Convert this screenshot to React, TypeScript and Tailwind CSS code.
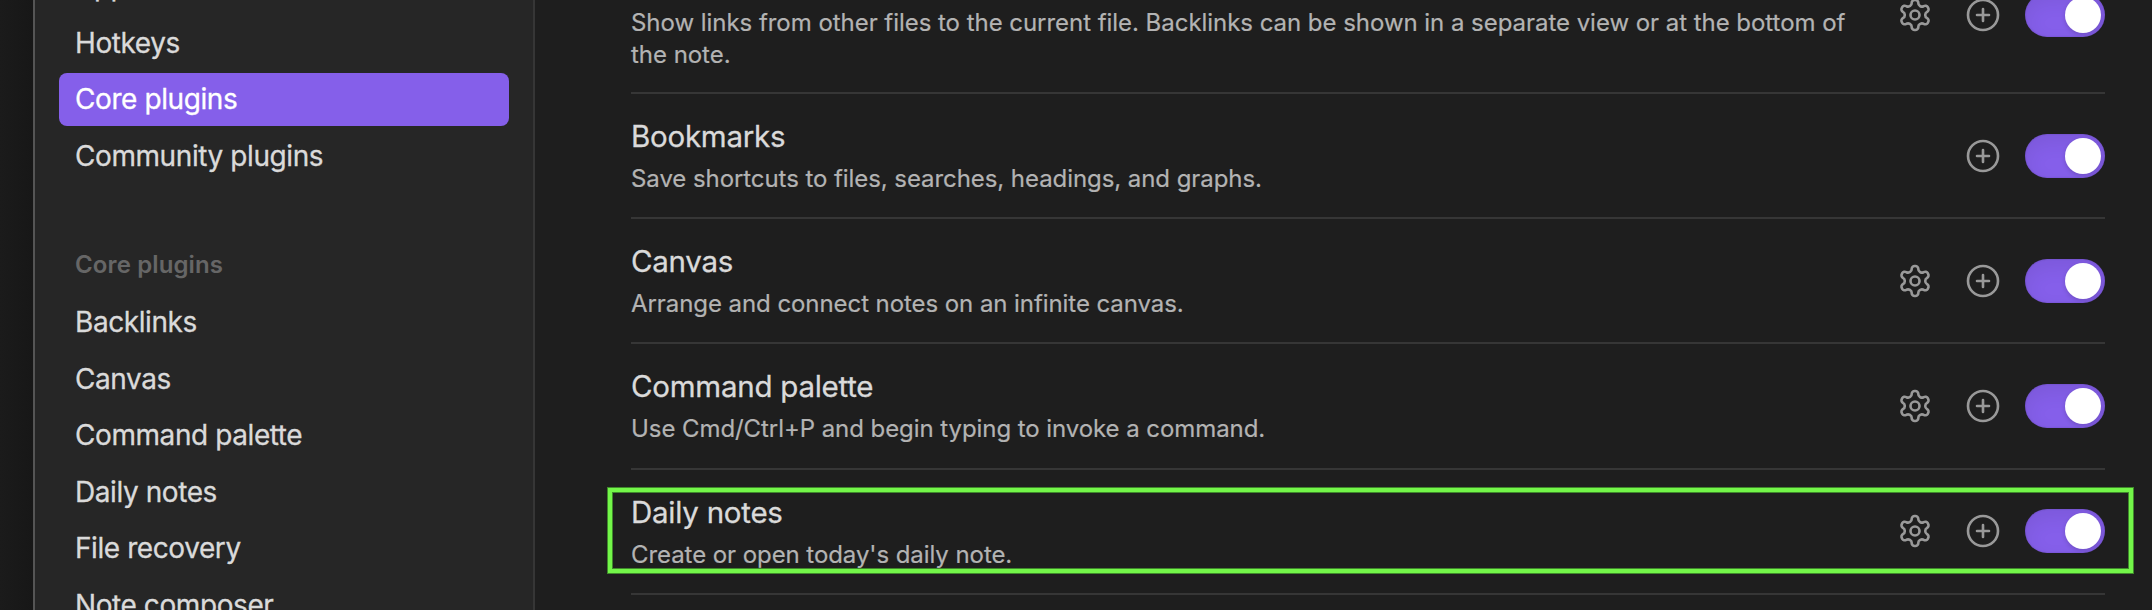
import type { ReactNode } from "react";

function Gear() {
  return (
    <svg viewBox="0 0 24 24" className="size-9" fill="none" stroke="#999999" strokeWidth="1.75" strokeLinecap="round" strokeLinejoin="round">
      <path d="M12.22 2h-.44a2 2 0 0 0-2 2v.18a2 2 0 0 1-1 1.73l-.43.25a2 2 0 0 1-2 0l-.15-.08a2 2 0 0 0-2.73.73l-.22.38a2 2 0 0 0 .73 2.73l.15.1a2 2 0 0 1 1 1.72v.51a2 2 0 0 1-1 1.74l-.15.09a2 2 0 0 0-.73 2.73l.22.38a2 2 0 0 0 2.73.73l.15-.08a2 2 0 0 1 2 0l.43.25a2 2 0 0 1 1 1.73V20a2 2 0 0 0 2 2h.44a2 2 0 0 0 2-2v-.18a2 2 0 0 1 1-1.73l.43-.25a2 2 0 0 1 2 0l.15.08a2 2 0 0 0 2.73-.73l.22-.39a2 2 0 0 0-.73-2.73l-.15-.08a2 2 0 0 1-1-1.74v-.5a2 2 0 0 1 1-1.74l.15-.09a2 2 0 0 0 .73-2.73l-.22-.38a2 2 0 0 0-2.73-.73l-.15.08a2 2 0 0 1-2 0l-.43-.25a2 2 0 0 1-1-1.73V4a2 2 0 0 0-2-2z" />
      <circle cx="12" cy="12" r="3" />
    </svg>
  );
}

function PlusCircle() {
  return (
    <svg viewBox="0 0 24 24" className="size-9" fill="none" stroke="#999999" strokeWidth="1.75" strokeLinecap="round" strokeLinejoin="round">
      <circle cx="12" cy="12" r="10" />
      <path d="M8 12h8M12 8v8" />
    </svg>
  );
}

function Toggle() {
  return (
    <div className="ml-6 flex h-11 w-20 justify-end rounded-full bg-[#855fea] p-1 shadow-[inset_0_8px_20px_rgba(0,0,0,0.07),inset_0_0_2px_rgba(0,0,0,0.21)]">
      <div className="size-9 rounded-full bg-white shadow-[0_2px_4px_rgba(0,0,0,0.15)]" />
    </div>
  );
}

function Row({ title, gear = true, children }: { title: string; gear?: boolean; children: ReactNode }) {
  return (
    <div className="flex h-[125.2px] shrink-0 items-center border-b-2 border-[#363636]">
      <div className="flex-1 pt-0.5">
        <div className="-mt-px h-[39px] text-[29.5px] leading-[39px] tracking-[-0.25px] text-[#dadada] [-webkit-text-stroke:0.3px_#dadada]">{title}</div>
        <div className="mt-[7px] text-[24px] leading-[32px] tracking-[-0.07px] text-[#b3b3b3] [-webkit-text-stroke:0.2px_#b3b3b3]">{children}</div>
      </div>
      <div className="flex items-center">
        {gear && <Gear />}
        <div className="ml-8">
          <PlusCircle />
        </div>
        <Toggle />
      </div>
    </div>
  );
}

function NavItem({ label, active = false }: { label: string; active?: boolean }) {
  return (
    <div
      className={
        active
          ? "mb-[3.5px] h-[53px] shrink-0 rounded-lg bg-[#855fea] px-4 text-[28px] leading-[53px] tracking-[-0.42px] text-white [-webkit-text-stroke:0.3px_#ffffff]"
          : "mb-[3.5px] h-[53px] shrink-0 px-4 text-[28px] leading-[53px] tracking-[-0.42px] text-[#dadada] [-webkit-text-stroke:0.3px_#dadada]"
      }
    >
      {label}
    </div>
  );
}

export default function App() {
  return (
    <div className="relative flex h-[610px] w-[2152px] overflow-hidden bg-[#1e1e1e] font-['Inter',sans-serif]">
      <div className="w-[33px] shrink-0 bg-linear-to-r from-[#1b1b1b] to-[#171717]" />
      <nav className="flex w-[502px] shrink-0 flex-col overflow-hidden border-x-2 border-l-[#555555] border-r-[#363636] bg-[#262626] px-6">
        <div className="-mt-10 flex flex-col">
          <NavItem label="Appearance" />
          <NavItem label="Hotkeys" />
          <NavItem label="Core plugins" active />
          <NavItem label="Community plugins" />
        </div>
        <div className="mt-[59px] mb-[11px] h-[40px] shrink-0 px-4 text-[24px] leading-[40px] font-semibold tracking-[0.12px] text-[#666666]">Core plugins</div>
        <NavItem label="Backlinks" />
        <NavItem label="Canvas" />
        <NavItem label="Command palette" />
        <NavItem label="Daily notes" />
        <NavItem label="File recovery" />
        <NavItem label="Note composer" />
      </nav>
      <main className="ml-24 flex w-[1474px] shrink-0 flex-col">
        <div className="flex h-[94px] shrink-0 items-start border-b-2 border-[#363636]">
          <div className="mt-[7px] flex-1 text-[24px] leading-[32px] tracking-[-0.04px] whitespace-nowrap text-[#b3b3b3] [-webkit-text-stroke:0.2px_#b3b3b3]">
            Show links from other files to the current file. Backlinks can be shown in a separate view or at the bottom of
            <br />
            the note.
          </div>
          <div className="-mt-[7px] flex items-center">
            <Gear />
            <div className="ml-8">
              <PlusCircle />
            </div>
            <Toggle />
          </div>
        </div>
        <Row title="Bookmarks" gear={false}>Save shortcuts to files, searches, headings, and graphs.</Row>
        <Row title="Canvas">Arrange and connect notes on an infinite canvas.</Row>
        <Row title="Command palette">Use Cmd/Ctrl+P and begin typing to invoke a command.</Row>
        <Row title="Daily notes">Create or open today's daily note.</Row>
      </main>
      <div className="absolute top-[487px] left-[607px] h-[87px] w-[1527px] border border-[#3f8a2b]">
        <div className="size-full border-4 border-[#73f649]">
          <div className="size-full border border-[#3f8a2b]" />
        </div>
      </div>
    </div>
  );
}
